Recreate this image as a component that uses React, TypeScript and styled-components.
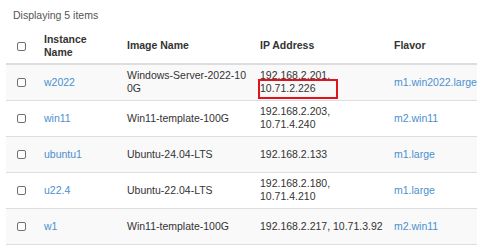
import React from "react";
import styled, { createGlobalStyle } from "styled-components";

const Global = createGlobalStyle`
  html, body { margin: 0; padding: 0; background: #fff; }
  body { font-family: "Liberation Sans", Arial, sans-serif; font-size: 10.5px; color: #333; }
  *, *::before, *::after { box-sizing: border-box; }
`;

const Page = styled.div`
  padding: 0 2px 0 6px;
  width: 479px;
`;

const Caption = styled.div`
  padding: 8px 0 0 7px;
  height: 28px;
  line-height: 14px;
  color: #555;
`;

const Table = styled.table`
  width: 471px;
  border-collapse: collapse;
  table-layout: fixed;
`;

const Col = styled.col<{ $w: number }>`
  width: ${(p) => p.$w}px;
`;

const Th = styled.th`
  height: 36px;
  padding: 0 4px 0 8px;
  text-align: left;
  font-weight: bold;
  line-height: 12.5px;
  vertical-align: middle;
  color: #333;
  border-bottom: 2px solid #ddd;
`;

const CheckTh = styled(Th)`
  padding: 0;
  text-align: center;
`;

const Row = styled.tr<{ $striped: boolean }>`
  background: ${(p) => (p.$striped ? "#f9f9f9" : "#fff")};
  border-bottom: 1px solid #ddd;
`;

const Td = styled.td<{ $pr?: number; $breakAll?: boolean }>`
  height: 36px;
  padding: 0 ${(p) => p.$pr ?? 4}px 0 8px;
  line-height: 13px;
  vertical-align: middle;
  word-break: ${(p) => (p.$breakAll ? "break-all" : "normal")};
  position: relative;
`;

const CheckTd = styled(Td)`
  padding: 0;
  text-align: center;
`;

const Box = styled.span`
  display: inline-block;
  width: 9px;
  height: 9px;
  border: 1.5px solid #6f6f6f;
  border-radius: 2px;
  background: #fff;
  vertical-align: middle;
`;

const Link = styled.a`
  color: #4a90cf;
  text-decoration: none;
`;

const Highlight = styled.span`
  position: absolute;
  left: 6px;
  top: 14px;
  width: 80px;
  height: 20px;
  border: 2px solid #e3131b;
  pointer-events: none;
`;

type Item = { name: string; image: string; ip: string; flavor: string; mark?: boolean };

const items: Item[] = [
  { name: "w2022", image: "Windows-Server-2022-100G", ip: "192.168.2.201, 10.71.2.226", flavor: "m1.win2022.large", mark: true },
  { name: "win11", image: "Win11-template-100G", ip: "192.168.2.203, 10.71.4.240", flavor: "m2.win11" },
  { name: "ubuntu1", image: "Ubuntu-24.04-LTS", ip: "192.168.2.133", flavor: "m1.large" },
  { name: "u22.4", image: "Ubuntu-22.04-LTS", ip: "192.168.2.180, 10.71.4.210", flavor: "m1.large" },
  { name: "w1", image: "Win11-template-100G", ip: "192.168.2.217, 10.71.3.92", flavor: "m2.win11" },
];

export default function App() {
  return (
    <Page>
      <Global />
      <Caption>Displaying 5 items</Caption>
      <Table>
        <colgroup>
          <Col $w={30} />
          <Col $w={83} />
          <Col $w={133} />
          <Col $w={134} />
          <Col $w={91} />
        </colgroup>
        <thead>
          <tr>
            <CheckTh><Box /></CheckTh>
            <Th>Instance Name</Th>
            <Th>Image Name</Th>
            <Th>IP Address</Th>
            <Th>Flavor</Th>
          </tr>
        </thead>
        <tbody>
          {items.map((it, i) => (
            <Row key={it.name} $striped={i % 2 === 0}>
              <CheckTd><Box /></CheckTd>
              <Td><Link href="#">{it.name}</Link></Td>
              <Td $breakAll>{it.image}</Td>
              <Td $pr={1}>
                {it.ip}
                {it.mark && <Highlight />}
              </Td>
              <Td $pr={0}><Link href="#">{it.flavor}</Link></Td>
            </Row>
          ))}
        </tbody>
      </Table>
    </Page>
  );
}
